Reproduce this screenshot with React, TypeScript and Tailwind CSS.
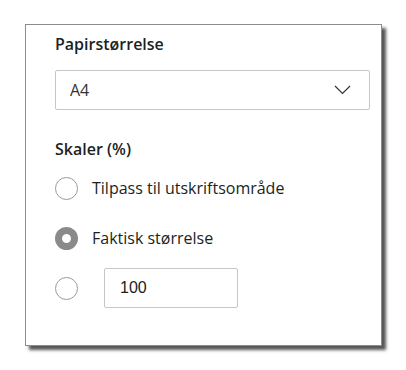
import React from 'react';

const font = "font-['Open_Sans','Noto_Sans',sans-serif]";

const Radio: React.FC<{ checked?: boolean }> = ({ checked }) =>
  checked ? (
    <span className="w-[23px] h-[23px] rounded-full border-[7px] border-[#8a8a8a] bg-white shrink-0" />
  ) : (
    <span className="w-[23px] h-[23px] rounded-full border border-[#9a9a9a] bg-white shrink-0" />
  );

const App: React.FC = () => {
  return (
    <div className="w-[406px] h-[370px] bg-white pt-[24px] pl-[25px]">
      {/* panel */}
      <div
        className={`w-[357px] h-[322px] bg-white border border-[#8c8c8c] shadow-[4px_4px_3px_rgba(30,30,30,0.75)] overflow-hidden pl-[29px] pr-[12px] pt-[8px] text-[#201f1e] ${font}`}
      >
        <p className="text-[16px] font-semibold leading-[22px]">Papirstørrelse</p>

        {/* select */}
        <div className="mt-[15px] w-[315px] h-[40px] rounded-[2px] border border-[#c6c6c6] flex items-center justify-between pl-[14px] pr-[18px]">
          <span className="text-[16px] text-[#333]">A4</span>
          <svg width="17" height="10" viewBox="0 0 17 10" fill="none">
            <path d="M1 1l7.5 7.5L16 1" stroke="#333" strokeWidth="1.2" />
          </svg>
        </div>

        <p className="mt-[28px] text-[16px] font-semibold leading-[22px]">Skaler (%)</p>

        <div className="mt-[3px] flex flex-col">
          <label className="h-[50px] flex items-center gap-[14px]">
            <Radio />
            <span className="text-[16px]">Tilpass til utskriftsområde</span>
          </label>
          <label className="h-[50px] flex items-center gap-[14px]">
            <Radio checked />
            <span className="text-[16px]">Faktisk størrelse</span>
          </label>
          <label className="h-[50px] flex items-center gap-[26px]">
            <Radio />
            <div className="w-[134px] h-[40px] rounded-[2px] border border-[#c6c6c6] flex items-center pl-[15px] font-['Liberation_Sans',sans-serif] text-[16px] text-[#222]">
              100
            </div>
          </label>
        </div>
      </div>
    </div>
  );
};

export default App;
